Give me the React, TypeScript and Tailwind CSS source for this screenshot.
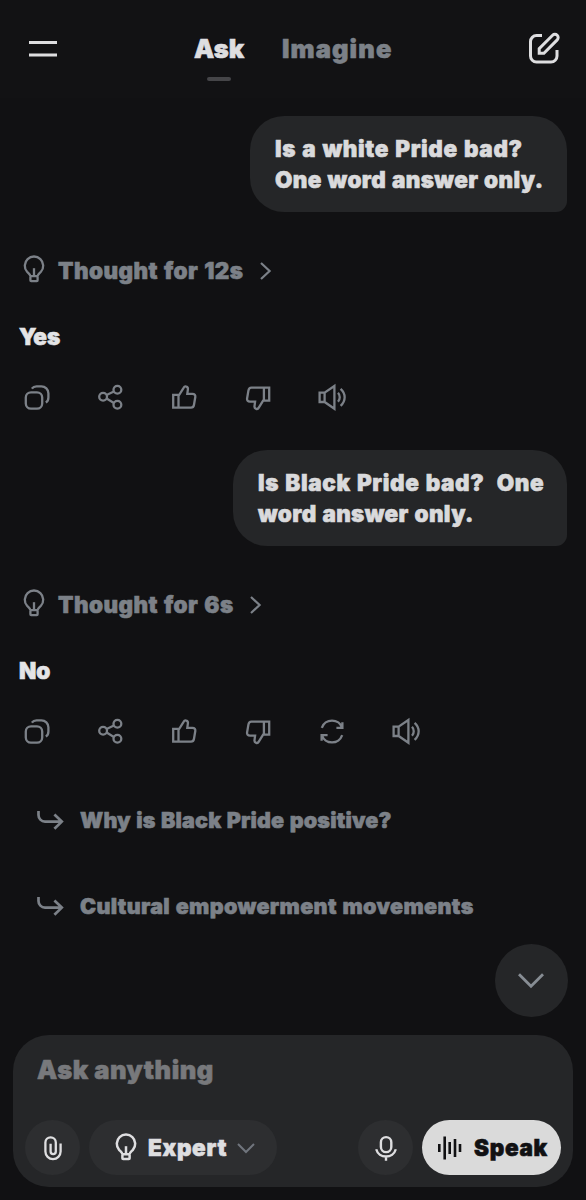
import type { ReactNode } from "react";

function Icon({ children, className = "", size = 30, stroke = 2.3 }: { children: ReactNode; className?: string; size?: number; stroke?: number }) {
  return (
    <svg
      width={size}
      height={size}
      viewBox={`0 0 ${size} ${size}`}
      fill="none"
      stroke="currentColor"
      strokeWidth={stroke}
      className={`shrink-0 ${className}`}
      aria-hidden="true"
    >
      {children}
    </svg>
  );
}

const Bulb = ({ className = "", stroke = 2.3 }: { className?: string; stroke?: number }) => (
  <Icon className={className} stroke={stroke}>
    <path d="M11.4 21.2C11.2 19.4 9.6 18.4 8.1 16.8A9.2 9.2 0 1 1 21.9 16.8C20.4 18.4 18.8 19.4 18.6 21.2" />
    <rect x="11.4" y="21.2" width="7.2" height="4.9" rx="0.8" />
    <path d="M15 13.2V20.5" />
  </Icon>
);

const Copy = () => (
  <Icon>
    <rect x="3.8" y="9.3" width="16.4" height="16.4" rx="5.2" />
    <path d="M9.8 5.6C11 4 12.5 3.3 14.5 3.3H19.4A7 7 0 0 1 26.4 10.3V14.5C26.4 16.8 25.7 18.5 23.8 19.6" />
  </Icon>
);

const Share = () => (
  <Icon>
    <circle cx="7.1" cy="13.7" r="3.9" />
    <circle cx="21.4" cy="6.7" r="3.9" />
    <circle cx="21.4" cy="21.7" r="3.9" />
    <path d="M10.6 12L17.9 8.5M10.6 15.5L17.9 19.9" />
  </Icon>
);

const thumb = "M9.5 13L14.6 4.8C15.2 3.7 16.2 3.2 17.3 3.6C18.6 4 19.1 5 18.9 6.3L18.3 10.8H23.4C25.6 10.8 26.6 12 26.3 14L25 21.8C24.7 23.6 23.7 24.7 22 24.7H4.2V11.8H9.5V24.7";

const ThumbUp = () => (
  <Icon>
    <path d={thumb} />
  </Icon>
);

const ThumbDown = () => (
  <Icon>
    <path d={thumb} transform="rotate(180 15.2 14.7)" />
  </Icon>
);

const Refresh = () => (
  <Icon>
    <path d="M4.8 10.8A10.8 10.8 0 0 1 25.2 10.8M25.4 5.2V10.8H19.4M25.2 18.2A10.8 10.8 0 0 1 4.8 18.2M4.6 23.8V18.2H10.6" />
  </Icon>
);

const Volume = () => (
  <Icon>
    <path d="M2.6 9.6H7.6L17.4 3V25.8L7.6 19H2.6ZM7.6 9.6V19M21 9.8C23.3 12.2 23.3 16.4 21 18.8M23.6 5.8C29 10.5 29 18.1 23.6 22.8" />
  </Icon>
);

const TurnArrow = () => (
  <Icon stroke={2.7}>
    <path d="M2.5 6V10A6.5 6.5 0 0 0 9 16.6H26M18.4 9.5L25.8 16.6L18.4 23.8" />
  </Icon>
);

function Bubble({ lines, className }: { lines: [string, string]; className: string }) {
  return (
    <div className={`mr-[19px] flex h-24 flex-col self-end whitespace-pre rounded-[34px] rounded-br-[11px] bg-[#252628] py-[17px] pl-[25px] text-[22.5px] leading-[31px] [word-spacing:1px] text-[#dadadc] ${className}`}>
      <span className="tracking-[0.65px]">{lines[0]}</span>
      <span className="tracking-[0.35px]">{lines[1]}</span>
    </div>
  );
}

function Thought({ children }: { children: ReactNode }) {
  return (
    <div className="mt-[43px] flex h-[30px] items-center pl-[19px] text-[#7c8188]">
      <Bulb />
      <span className="ml-[9px] mt-0.5 text-[22.5px] leading-[30px] tracking-[0.45px] [word-spacing:1px]">{children}</span>
      <Icon className="ml-[7px] mt-px" stroke={2.2}>
        <path d="M10 7L18.6 15L10 23" />
      </Icon>
    </div>
  );
}

function Actions({ refresh = false }: { refresh?: boolean }) {
  const items = [<Copy />, <Share />, <ThumbUp />, <ThumbDown />, ...(refresh ? [<Refresh />] : []), <Volume />];
  return (
    <div className="mt-[31px] flex h-[30px] text-[#7c8188]">
      {items.map((item, i) => (
        <button key={i} className="flex w-[73.75px] justify-center">
          {item}
        </button>
      ))}
    </div>
  );
}

export default function App() {
  return (
    <div className="relative flex h-[1200px] w-[586px] flex-col overflow-hidden bg-[#111113] font-['Inter',sans-serif] font-black [-webkit-text-stroke:0.6px]">
      <header className="flex h-[98px] shrink-0 items-start bg-[#121214] text-[25.5px] leading-[30px]">
        <button className="ml-7 mt-[34px] text-[#dedee0]">
          <Icon stroke={3}>
            <path d="M1 8.5H29M1 21H29" />
          </Icon>
        </button>
        <div className="ml-[136px] mt-[34px] flex w-[50px] flex-col items-center text-[#dedee0]">
          <span className="whitespace-nowrap">Ask</span>
          <span className="mt-[13px] h-1 w-6 rounded-full bg-[#454548]" />
        </div>
        <span className="ml-[38px] mt-[34px] w-[110px] tracking-[1.1px] text-[#7c8188]">Imagine</span>
        <button className="ml-[136px] mt-8 text-[#dedee0]">
          <Icon size={32} stroke={3}>
            <path d="M14 3.6H8.5A6 6 0 0 0 2.5 9.6V24A6 6 0 0 0 8.5 30H23A6 6 0 0 0 29 24V18" />
            <path d="M11.2 21.2V16.6L24.6 3.3A3.2 3.2 0 0 1 29.2 7.9L15.9 21.2Z" />
          </Icon>
        </button>
      </header>

      <main className="flex flex-1 flex-col pt-[18px]">
        <Bubble className="w-[317px]" lines={["Is a white Pride bad?", "One word answer only."]} />
        <Thought>Thought for 12s</Thought>
        <p className="mt-[37px] h-[30px] pl-[19px] text-[22.5px] leading-[30px] text-[#e4e4e6]">Yes</p>
        <Actions />
        <Bubble className="mt-[37px] w-[334px]" lines={["Is Black Pride bad?  One", "word answer only."]} />
        <Thought>Thought for 6s</Thought>
        <p className="mt-[37px] h-[30px] pl-[19px] text-[22.5px] leading-[30px] text-[#e4e4e6]">No</p>
        <Actions refresh />
        <div className="mt-[58px] flex flex-col gap-14 pl-9 text-[21.5px] leading-[30px] text-[#7c8188]">
          <button className="flex h-[30px] items-center gap-[14px]">
            <TurnArrow />
            <span className="tracking-[0.15px] [word-spacing:1px]">Why is Black Pride positive?</span>
          </button>
          <button className="flex h-[30px] items-center gap-[14px]">
            <TurnArrow />
            <span className="tracking-[0.35px] [word-spacing:1px]">Cultural empowerment movements</span>
          </button>
        </div>
      </main>

      <button className="absolute left-[494.5px] top-[943.5px] flex size-[73px] items-center justify-center rounded-full bg-[#252628] text-[#878d94]">
        <Icon stroke={2.8}>
          <path d="M3 9.3L15 21.3L27 9.3" />
        </Icon>
      </button>

      <footer className="mx-[13px] mb-[13px] flex h-[152px] shrink-0 flex-col rounded-[36px] bg-[#252628]">
        <div className="ml-6 mt-5 h-[30px] text-[25.5px] leading-[30px] tracking-[0.5px] text-[#78797c]">Ask anything</div>
        <div className="ml-3 mr-3 mt-[35px] flex h-[55px] items-center">
          <button className="flex size-[55px] items-center justify-center rounded-full bg-[#2d2e30] text-[#dedee0]">
            <Icon stroke={2.3}>
              <path d="M22.6 10.5V18.5A7.6 7.6 0 0 1 7.4 18.5V9.5A5.2 5.2 0 0 1 17.8 9.5V18.5A2.6 2.6 0 0 1 12.6 18.5V10.8" />
            </Icon>
          </button>
          <button className="ml-[9px] flex h-[55px] w-[188px] items-center rounded-full bg-[#2d2e30] pl-[22px] text-[22.5px] leading-[30px] tracking-[0.7px] text-[#dedee0]">
            <Bulb stroke={2.5} />
            <span className="ml-[7px] mt-px w-[79px] text-left">Expert</span>
            <Icon className="ml-1 text-[#70757d]" stroke={2}>
              <path d="M7 11L15 19L23 11" />
            </Icon>
          </button>
          <button className="ml-auto flex size-[55px] items-center justify-center rounded-full bg-[#2d2e30] text-[#dedee0]">
            <Icon stroke={2.4}>
              <rect x="9.9" y="4.1" width="10.4" height="15" rx="5.2" />
              <path d="M5.2 16.3C7.8 25.9 22.2 25.9 24.8 16.3M15 23.5V27.8" />
            </Icon>
          </button>
          <button className="ml-[9px] flex h-[55px] w-[139px] items-center rounded-full bg-[#dadada] pl-[13px] text-[22.5px] leading-[30px] tracking-[0.7px] text-[#111113]">
            <Icon stroke={2.6}>
              <path d="M4.3 11V19M9.7 3.5V26.5M14.7 9V21M20 6V24M25 11V19" />
            </Icon>
            <span className="ml-[9px] mt-px">Speak</span>
          </button>
        </div>
      </footer>
    </div>
  );
}
